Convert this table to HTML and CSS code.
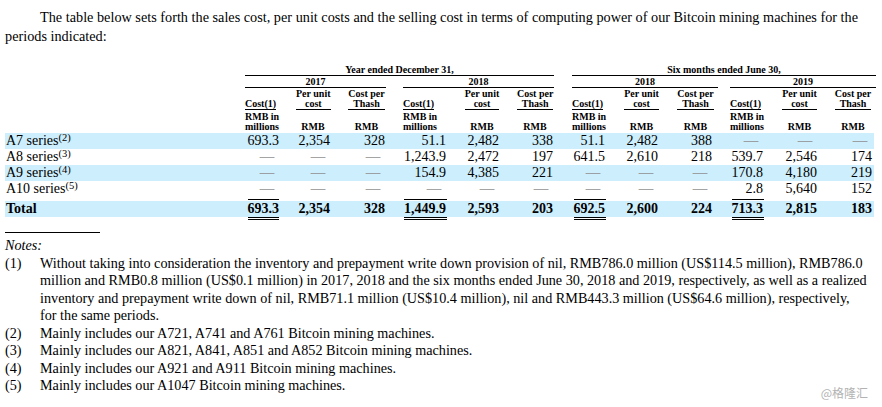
FILE: index.html
```html
<!DOCTYPE html>
<html lang="en">
<head>
<meta charset="utf-8">
<title>Sales cost of Bitcoin mining machines</title>
<link rel="stylesheet" href="styles.css">
</head>
<body>
<main class="page">
  <p class="intro">The table below sets forth the sales cost, per unit costs and the selling cost in terms of computing power of our Bitcoin mining machines for the periods indicated:</p>

  <div class="tbl">
    <div class="hrow h1">
      <div class="yr"><div class="rule">Year ended December 31,</div></div>
      <div class="sm"><div class="rule">Six months ended June 30,</div></div>
    </div>
    <div class="hrow h2">
      <div class="g1"><div class="rule">2017</div></div>
      <div class="g2"><div class="rule">2018</div></div>
      <div class="g3"><div class="rule">2018</div></div>
      <div class="g4"><div class="rule">2019</div></div>
    </div>
    <div class="hrow h3">
      <div></div>
      <div class="cost"><span class="ul">Cost(1)</span></div>
      <div><span class="ul">Per unit<br>cost</span></div>
      <div><span class="ul">Cost per<br>Thash</span></div>
      <div class="cost"><span class="ul">Cost(1)</span></div>
      <div><span class="ul">Per unit<br>cost</span></div>
      <div><span class="ul">Cost per<br>Thash</span></div>
      <div class="cost"><span class="ul">Cost(1)</span></div>
      <div><span class="ul">Per unit<br>cost</span></div>
      <div><span class="ul">Cost per<br>Thash</span></div>
      <div class="cost"><span class="ul">Cost(1)</span></div>
      <div><span class="ul">Per unit<br>cost</span></div>
      <div><span class="ul">Cost per<br>Thash</span></div>
    </div>
    <div class="hrow h4">
      <div></div>
      <div class="cost">RMB in<br>millions</div>
      <div>RMB</div>
      <div>RMB</div>
      <div class="cost">RMB in<br>millions</div>
      <div>RMB</div>
      <div>RMB</div>
      <div class="cost">RMB in<br>millions</div>
      <div>RMB</div>
      <div>RMB</div>
      <div class="cost">RMB in<br>millions</div>
      <div>RMB</div>
      <div>RMB</div>
    </div>

    <div class="row band">
      <div class="lbl">A7 series<span class="fn">(2)</span></div>
      <div>693.3</div><div>2,354</div><div>328</div>
      <div>51.1</div><div>2,482</div><div>338</div>
      <div>51.1</div><div>2,482</div><div>388</div>
      <div><span class="na">—</span></div><div><span class="na">—</span></div><div><span class="na">—</span></div>
    </div>
    <div class="row">
      <div class="lbl">A8 series<span class="fn">(3)</span></div>
      <div><span class="na">—</span></div><div><span class="na">—</span></div><div><span class="na">—</span></div>
      <div>1,243.9</div><div>2,472</div><div>197</div>
      <div>641.5</div><div>2,610</div><div>218</div>
      <div>539.7</div><div>2,546</div><div>174</div>
    </div>
    <div class="row band">
      <div class="lbl">A9 series<span class="fn">(4)</span></div>
      <div><span class="na">—</span></div><div><span class="na">—</span></div><div><span class="na">—</span></div>
      <div>154.9</div><div>4,385</div><div>221</div>
      <div><span class="na">—</span></div><div><span class="na">—</span></div><div><span class="na">—</span></div>
      <div>170.8</div><div>4,180</div><div>219</div>
    </div>
    <div class="row">
      <div class="lbl">A10 series<span class="fn">(5)</span></div>
      <div><span class="na">—</span></div><div><span class="na">—</span></div><div><span class="na">—</span></div>
      <div><span class="na">—</span></div><div><span class="na">—</span></div><div><span class="na">—</span></div>
      <div><span class="na">—</span></div><div><span class="na">—</span></div><div><span class="na">—</span></div>
      <div>2.8</div><div>5,640</div><div>152</div>
    </div>
    <div class="row band total">
      <div class="lbl">Total</div>
      <div class="tot">693.3</div><div>2,354</div><div>328</div>
      <div class="tot">1,449.9</div><div>2,593</div><div>203</div>
      <div class="tot">692.5</div><div>2,600</div><div>224</div>
      <div class="tot">713.3</div><div>2,815</div><div>183</div>
    </div>
  </div>

  <div class="notes-rule"></div>
  <p class="notes-title">Notes:</p>
  <ol class="notes">
    <li><span>(1)</span><span>Without taking into consideration the inventory and prepayment write down provision of nil, RMB786.0 million (US$114.5 million), RMB786.0<br>million and RMB0.8 million (US$0.1 million) in 2017, 2018 and the six months ended June 30, 2018 and 2019, respectively, as well as a realized<br>inventory and prepayment write down of nil, RMB71.1 million (US$10.4 million), nil and RMB443.3 million (US$64.6 million), respectively,<br>for the same periods.</span></li>
    <li><span>(2)</span><span>Mainly includes our A721, A741 and A761 Bitcoin mining machines.</span></li>
    <li><span>(3)</span><span>Mainly includes our A821, A841, A851 and A852 Bitcoin mining machines.</span></li>
    <li><span>(4)</span><span>Mainly includes our A921 and A911 Bitcoin mining machines.</span></li>
    <li><span>(5)</span><span>Mainly includes our A1047 Bitcoin mining machines.</span></li>
  </ol>

  <div class="wm">@格隆汇</div>
</main>
</body>
</html>
```

FILE: styles.css
```css
* { box-sizing: border-box; }

body {
  margin: 0;
  background: #fff;
  color: #000;
  font-family: "Liberation Serif", "Times New Roman", serif;
}

.page {
  position: relative;
  width: 882px;
  height: 407px;
  padding: 8px 5px 0 5px;
  overflow: hidden;
}

.intro {
  margin: 0;
  font-size: 14.25px;
  line-height: 19px;
  text-indent: 35px;
}

/* ---------- table ---------- */
.tbl { margin-top: 19px; }

.hrow,
.row {
  display: grid;
  grid-template-columns: 223px 51px 51px 56px 61px 53px 54px 52px 53px 59px 46px 54px 58px;
}

.hrow {
  font-size: 10px;
  font-weight: bold;
  line-height: 10px;
}

.rule {
  border-bottom: 1px solid #000;
  text-align: center;
  white-space: nowrap;
}

.h1 .yr { grid-column: 2 / span 6; padding-left: 17px; }
.h1 .sm { grid-column: 8 / span 6; padding-left: 18px; }

.h2 { padding-top: 1px; }
.h2 .g1 { grid-column: 2 / span 3; padding-left: 17px; }
.h2 .g2 { grid-column: 5 / span 3; padding-left: 17px; }
.h2 .g3 { grid-column: 8 / span 3; padding-left: 18px; }
.h2 .g4 { grid-column: 11 / span 3; padding-left: 12px; }

.h3 > div,
.h4 > div {
  align-self: end;
  text-align: center;
  white-space: nowrap;
}
.h3 > .cost,
.h4 > .cost { text-align: left; }

.h3 { padding-top: 1px; }
.h4 { padding: 2px 0 1px; }

.ul {
  display: inline-block;
  border-bottom: 1px solid #000;
  text-align: center;
}

.h3 > :nth-child(2),  .h4 > :nth-child(2)  { padding: 0 0 0 17px; }
.h3 > :nth-child(3),  .h4 > :nth-child(3)  { padding: 0 0 0 17px; }
.h3 > :nth-child(4),  .h4 > :nth-child(4)  { padding: 0 1px 0 18px; }
.h3 > :nth-child(5),  .h4 > :nth-child(5)  { padding: 0 0 0 17px; }
.h3 > :nth-child(6),  .h4 > :nth-child(6)  { padding: 0 0 0 17px; }
.h3 > :nth-child(7),  .h4 > :nth-child(7)  { padding: 0 1px 0 17px; }
.h3 > :nth-child(8),  .h4 > :nth-child(8)  { padding: 0 0 0 18px; }
.h3 > :nth-child(9),  .h4 > :nth-child(9)  { padding: 0 0 0 18px; }
.h3 > :nth-child(10), .h4 > :nth-child(10) { padding: 0 2px 0 16px; }
.h3 > :nth-child(11), .h4 > :nth-child(11) { padding: 0 0 0 12px; }
.h3 > :nth-child(12), .h4 > :nth-child(12) { padding: 0 0 0 17px; }
.h3 > :nth-child(13), .h4 > :nth-child(13) { padding: 0 3px 0 15px; }

/* body rows */
.row {
  width: 869px;
  font-size: 14px;
  line-height: 16px;
}
.row.band { background: #cdeefc; }

.row > div {
  text-align: right;
  white-space: nowrap;
  padding-right: 1px;
}
.row > :nth-child(2),
.row > :nth-child(3) { padding-right: 0; }
.row > :nth-child(10) { padding-right: 6px; }
.row > :nth-child(13) { padding-right: 4px; }
.row > .lbl {
  text-align: left;
  padding: 0 0 0 1px;
}

.fn {
  font-size: 10.5px;
  vertical-align: 4px;
  line-height: 0;
}

.na {
  color: #8f8f8f;
  margin-right: 5px;
  -webkit-text-stroke: 0.4px #8f8f8f;
}

.total {
  margin-top: 4px;
  font-weight: bold;
}

.row > .tot {
  justify-self: end;
  margin: -2px 0 -3px;
  padding-top: 1px;
  border-top: 1px solid #000;
  border-bottom: 3px double #000;
}

/* ---------- notes ---------- */
.notes-rule {
  width: 95px;
  margin-top: 15px;
  border-top: 1px solid #000;
}

.notes-title {
  margin: 4px 0 0;
  font-size: 14.2px;
  line-height: 17.5px;
  font-style: italic;
}

.notes {
  list-style: none;
  margin: 0;
  padding: 0;
  font-size: 14.2px;
  line-height: 17.5px;
}
.notes li {
  display: grid;
  grid-template-columns: 35px auto;
  white-space: nowrap;
}

.wm {
  position: absolute;
  right: 14px;
  bottom: 7px;
  font-family: "Noto Sans CJK SC", "Noto Sans", sans-serif;
  font-size: 12px;
  line-height: 14px;
  color: #b3b3b3;
}
```
